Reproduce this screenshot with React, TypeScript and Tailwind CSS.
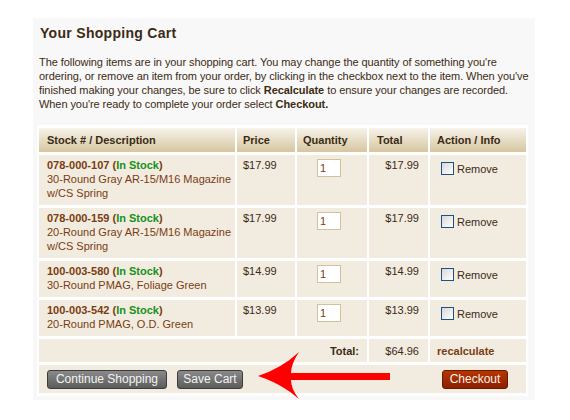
import React from "react";

type Item = {
  sku: string;
  desc: string[];
  price: string;
  total: string;
};

const items: Item[] = [
  { sku: "078-000-107", desc: ["30-Round Gray AR-15/M16 Magazine", "w/CS Spring"], price: "$17.99", total: "$17.99" },
  { sku: "078-000-159", desc: ["20-Round Gray AR-15/M16 Magazine", "w/CS Spring"], price: "$17.99", total: "$17.99" },
  { sku: "100-003-580", desc: ["30-Round PMAG, Foliage Green"], price: "$14.99", total: "$14.99" },
  { sku: "100-003-542", desc: ["20-Round PMAG, O.D. Green"], price: "$13.99", total: "$13.99" },
];

const CheckBox = () => (
  <span className="inline-block w-[13px] h-[13px] border border-[#1c5180] bg-gradient-to-br from-[#d8d8d8] to-[#ffffff] shrink-0" />
);

const GrayButton = ({ label, width }: { label: string; width: string }) => (
  <button
    className={`${width} h-[19px] rounded-[3px] border border-[#3c3c3c] bg-gradient-to-b from-[#8a8a8a] to-[#5c5c5c] text-[12px] leading-[17px] text-[#f4f4f4] text-center`}
  >
    {label}
  </button>
);

const Arrow = () => (
  <svg
    className="absolute left-[250px] top-[345px]"
    width="150"
    height="60"
    viewBox="250 345 150 60"
  >
    <path
      d="M258 376 Q282 368 299 352 Q291 364 291 373 L390 373 L390 380 L291 380 Q291 389 299 399 Q282 384 258 376 Z"
      fill="#ff0000"
    />
  </svg>
);

const App = () => {
  return (
    <div className="relative w-[570px] h-[420px] pt-[18px] pl-[33px] bg-white font-['Liberation_Sans',Arial,sans-serif] text-[11px] leading-[14px] text-[#3b2b14]">
      <div className="w-[502px] h-[382px] bg-[#f8f8f8] pl-[4px] pt-[6px]">
        <h1 className="pl-[3px] text-[14px] leading-[18px] font-bold tracking-[0.3px] text-[#3b2b14]">
          Your Shopping Cart
        </h1>
        <p className="mt-[13px] pl-[2px] tracking-[-0.07px]">
          <span className="block whitespace-nowrap">
            The following items are in your shopping cart. You may change the quantity of something you're
          </span>
          <span className="block whitespace-nowrap">
            ordering, or remove an item from your order, by clicking in the checkbox next to the item. When you've
          </span>
          <span className="block whitespace-nowrap">
            finished making your changes, be sure to click <b>Recalculate</b> to ensure your changes are recorded.
          </span>
          <span className="block whitespace-nowrap">
            When you're ready to complete your order select <b>Checkout.</b>
          </span>
        </p>

        <table className="mt-[14px] w-[491px] table-fixed border-separate [border-spacing:2px_3px] bg-white">
          <colgroup>
            <col className="w-[196px]" />
            <col className="w-[58px]" />
            <col className="w-[70px]" />
            <col className="w-[59px]" />
            <col className="w-[96px]" />
          </colgroup>
          <thead>
            <tr className="h-[24px] bg-gradient-to-b from-[#f7f3ea] to-[#d6c6a0] text-left font-bold">
              <th className="pl-[8px] font-bold">Stock # / Description</th>
              <th className="pl-[6px] font-bold">Price</th>
              <th className="pl-[6px] font-bold">Quantity</th>
              <th className="pl-[8px] font-bold">Total</th>
              <th className="pl-[7px] font-bold">Action / Info</th>
            </tr>
          </thead>
          <tbody>
            {items.map((item) => (
              <tr key={item.sku} className="bg-[#f2ece0] align-top">
                <td className="pl-[8px] pt-[3px] pb-[5px] text-[#7a3c10]">
                  <div className="whitespace-nowrap">
                    <b>{item.sku}</b> <b>(</b>
                    <b className="text-[#17911b]">In Stock</b>
                    <b>)</b>
                  </div>
                  {item.desc.map((line) => (
                    <div key={line} className="whitespace-nowrap">
                      {line}
                    </div>
                  ))}
                </td>
                <td className="pl-[6px] pt-[3px]">{item.price}</td>
                <td className="pl-[20px] pt-[4px]">
                  <input
                    defaultValue="1"
                    className="block w-[24px] h-[18px] border border-[#d2c29c] bg-white px-[2px] text-[11px] text-[#7a3c10] outline-none"
                  />
                </td>
                <td className="pr-[9px] pt-[3px] text-right">{item.total}</td>
                <td className="pl-[11px] pt-[7px]">
                  <div className="flex items-end gap-[3px]">
                    <CheckBox />
                    <span className="leading-[11px] text-[#3b2b14]">Remove</span>
                  </div>
                </td>
              </tr>
            ))}
            <tr className="h-[23px] bg-[#f2ece0]">
              <td colSpan={3} className="pr-[8px] text-right font-bold">
                Total:
              </td>
              <td className="pr-[9px] text-right">$64.96</td>
              <td className="pl-[7px] font-bold text-[#7a3c10]">recalculate</td>
            </tr>
            <tr className="bg-[#f2ece0]">
              <td colSpan={5} className="h-[28px] pl-[8px] pr-[18px]">
                <div className="flex items-center justify-between">
                  <div className="flex items-center gap-[10px]">
                    <GrayButton label="Continue Shopping" width="w-[120px]" />
                    <GrayButton label="Save Cart" width="w-[66px]" />
                  </div>
                  <button className="w-[66px] h-[19px] rounded-[3px] border border-[#6a1800] bg-gradient-to-b from-[#b53600] to-[#8c2000] text-[12px] leading-[17px] text-[#f8f0ea]">
                    Checkout
                  </button>
                </div>
              </td>
            </tr>
          </tbody>
        </table>
      </div>
      <Arrow />
    </div>
  );
};

export default App;
